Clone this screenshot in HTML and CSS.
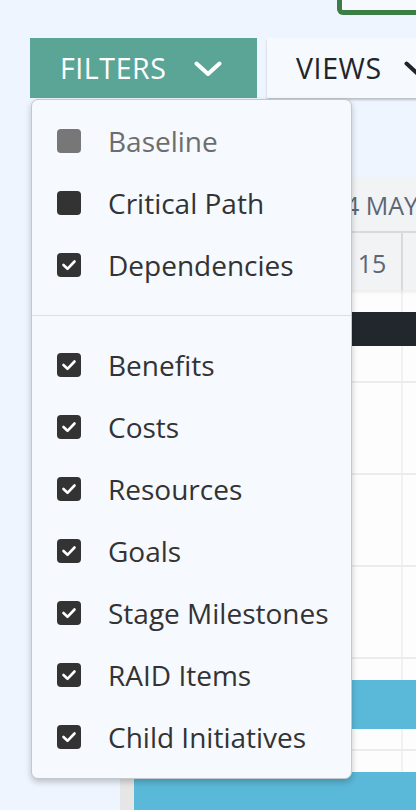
FILE: index.html
```html
<!DOCTYPE html>
<html>
<head>
<meta charset="utf-8">
<link rel="stylesheet" href="styles.css">
</head>
<body>
<div class="page">
  <div class="top">
    <div class="greenbox"></div>
  </div>
  <div class="toolbar">
    <button class="btn btn-filters">FILTERS
      <svg class="chev" width="28" height="16" viewBox="0 0 28 16"><path d="M2.5 2.5 L14 13 L25.5 2.5" fill="none" stroke="#fff" stroke-width="4" stroke-linecap="round" stroke-linejoin="round"/></svg>
    </button>
    <button class="btn btn-views">VIEWS
      <svg class="chev" width="28" height="16" viewBox="0 0 28 16"><path d="M2.5 2.5 L14 13 L25.5 2.5" fill="none" stroke="#212529" stroke-width="4" stroke-linecap="round" stroke-linejoin="round"/></svg>
    </button>
  </div>

  <div class="gantt">
    <div class="gantt-head">
      <div class="month-row"><span class="month">4 MAY</span></div>
      <div class="day-row">
        <div class="day-spacer"></div>
        <div class="day">12</div>
        <div class="day">13</div>
        <div class="day">14</div>
        <div class="day">15</div>
        <div class="day">16</div>
      </div>
    </div>
    <div class="gantt-body">
      <div class="g-row"><div class="bar bar-dark"></div></div>
      <div class="g-row"></div>
      <div class="g-row"></div>
      <div class="g-row"></div>
      <div class="g-row"><div class="bar bar-blue"></div></div>
      <div class="g-row"><div class="bar bar-blue"></div></div>
    </div>
  </div>

  <div class="dropdown">
    <div class="item disabled"><span class="cb"></span><span class="label">Baseline</span></div>
    <div class="item"><span class="cb"></span><span class="label">Critical Path</span></div>
    <div class="item"><span class="cb"><svg viewBox="0 0 24 24" width="24" height="24"><path d="M6.5 12 L10.5 15.8 L17.5 8.5" fill="none" stroke="#fff" stroke-width="2.6" stroke-linecap="round" stroke-linejoin="round"/></svg></span><span class="label">Dependencies</span></div>
    <div class="divider"></div>
    <div class="item"><span class="cb"><svg viewBox="0 0 24 24" width="24" height="24"><path d="M6.5 12 L10.5 15.8 L17.5 8.5" fill="none" stroke="#fff" stroke-width="2.6" stroke-linecap="round" stroke-linejoin="round"/></svg></span><span class="label">Benefits</span></div>
    <div class="item"><span class="cb"><svg viewBox="0 0 24 24" width="24" height="24"><path d="M6.5 12 L10.5 15.8 L17.5 8.5" fill="none" stroke="#fff" stroke-width="2.6" stroke-linecap="round" stroke-linejoin="round"/></svg></span><span class="label">Costs</span></div>
    <div class="item"><span class="cb"><svg viewBox="0 0 24 24" width="24" height="24"><path d="M6.5 12 L10.5 15.8 L17.5 8.5" fill="none" stroke="#fff" stroke-width="2.6" stroke-linecap="round" stroke-linejoin="round"/></svg></span><span class="label">Resources</span></div>
    <div class="item"><span class="cb"><svg viewBox="0 0 24 24" width="24" height="24"><path d="M6.5 12 L10.5 15.8 L17.5 8.5" fill="none" stroke="#fff" stroke-width="2.6" stroke-linecap="round" stroke-linejoin="round"/></svg></span><span class="label">Goals</span></div>
    <div class="item"><span class="cb"><svg viewBox="0 0 24 24" width="24" height="24"><path d="M6.5 12 L10.5 15.8 L17.5 8.5" fill="none" stroke="#fff" stroke-width="2.6" stroke-linecap="round" stroke-linejoin="round"/></svg></span><span class="label">Stage Milestones</span></div>
    <div class="item"><span class="cb"><svg viewBox="0 0 24 24" width="24" height="24"><path d="M6.5 12 L10.5 15.8 L17.5 8.5" fill="none" stroke="#fff" stroke-width="2.6" stroke-linecap="round" stroke-linejoin="round"/></svg></span><span class="label">RAID Items</span></div>
    <div class="item"><span class="cb"><svg viewBox="0 0 24 24" width="24" height="24"><path d="M6.5 12 L10.5 15.8 L17.5 8.5" fill="none" stroke="#fff" stroke-width="2.6" stroke-linecap="round" stroke-linejoin="round"/></svg></span><span class="label">Child Initiatives</span></div>
  </div>
</div>
</body>
</html>
```

FILE: styles.css
```css
html, body {
  margin: 0;
  padding: 0;
}
body {
  background: #eff5fe;
  font-family: "Open Sans", "Noto Sans", sans-serif;
  width: 416px;
  height: 810px;
  overflow: hidden;
}
.page {
  position: relative;
  width: 416px;
  height: 810px;
  overflow: hidden;
}
.top {
  height: 38px;
  display: flex;
  justify-content: flex-end;
}
.greenbox {
  width: 100px;
  height: 15px;
  margin-right: -21px;
  box-sizing: border-box;
  border: 5px solid #3b7d45;
  border-top: none;
  border-radius: 0 0 0 6px;
  background: #f6f9fe;
  flex-shrink: 0;
}
.toolbar {
  display: flex;
  gap: 10px;
  padding-left: 30px;
  height: 60px;
}
.btn {
  border: none;
  margin: 0;
  height: 60px;
  display: flex;
  align-items: center;
  font-family: "Open Sans", "Noto Sans", sans-serif;
  font-size: 28.5px;
  letter-spacing: 0.6px;
  flex-shrink: 0;
  box-sizing: border-box;
}
.btn-filters {
  width: 227px;
  background: #5ba597;
  color: #ffffff;
  padding: 0 0 0 30px;
  gap: 27px;
}
.btn-views {
  width: 200px;
  background: #f6f9fe;
  color: #212529;
  padding: 0 0 0 29px;
  gap: 22px;
  box-shadow: 0 2px 2px rgba(0, 0, 0, 0.22);
}
.chev {
  display: block;
  margin-top: 2px;
}

/* gantt */
.gantt {
  margin-top: 79px;
  margin-left: 120px;
  width: 400px;
  border-left: 14px solid #e6e6e6;
}
.gantt-head {
  background: #f2f3f5;
  position: relative;
  z-index: 1;
  box-shadow: 0 2px 4px rgba(0, 0, 0, 0.08);
}
.month-row {
  height: 56px;
  border-bottom: 2px solid #d9dadc;
  box-sizing: border-box;
  display: flex;
  align-items: center;
  padding-left: 211px;
  color: #5b6676;
  font-size: 25px;
  padding-top: 2px;
}
.day-row {
  height: 57px;
  display: flex;
}
.day-spacer {
  width: 29px;
  flex-shrink: 0;
  border-right: 2px solid #d8d9db;
  box-sizing: border-box;
}
.day {
  width: 60px;
  flex-shrink: 0;
  box-sizing: border-box;
  border-right: 2px solid #d8d9db;
  display: flex;
  align-items: center;
  justify-content: center;
  color: #5b6676;
  font-size: 25px;
  padding-top: 2px;
}
.gantt-body {
  background-color: #fdfdfd;
  background-image: linear-gradient(to right, transparent 0, transparent 267px, #f1f1f1 267px, #f1f1f1 269px, transparent 269px);
}
.g-row {
  height: 92px;
  box-sizing: border-box;
  border-bottom: 2px solid #ececec;
  padding-top: 21px;
}
.g-row:first-child {
  height: 93px;
  padding-top: 22px;
}
.bar {
  width: 100%;
}
.bar-dark {
  height: 34px;
  background: #22272e;
}
.bar-blue {
  height: 49px;
  background: #5ab8d8;
}

/* dropdown */
.dropdown {
  position: absolute;
  top: 99px;
  left: 31px;
  width: 321px;
  box-sizing: border-box;
  background: #f6f9fe;
  border: 1px solid #c4c8cd;
  border-radius: 7px;
  box-shadow: 0 3px 6px rgba(0, 0, 0, 0.22);
  padding: 10px 0;
  z-index: 5;
}
.item {
  height: 62px;
  display: flex;
  align-items: center;
  padding-left: 25px;
}
.cb {
  width: 24px;
  height: 24px;
  border-radius: 4px;
  background: #333333;
  flex-shrink: 0;
  display: block;
}
.cb svg {
  display: block;
}
.label {
  margin-left: 27px;
  font-size: 28px;
  color: #333333;
  white-space: nowrap;
}
.disabled .cb {
  background: #777777;
}
.disabled .label {
  color: #6d6d6d;
}
.divider {
  height: 1px;
  background: #dcdfe3;
  margin: 19px 0 18px;
}
```
